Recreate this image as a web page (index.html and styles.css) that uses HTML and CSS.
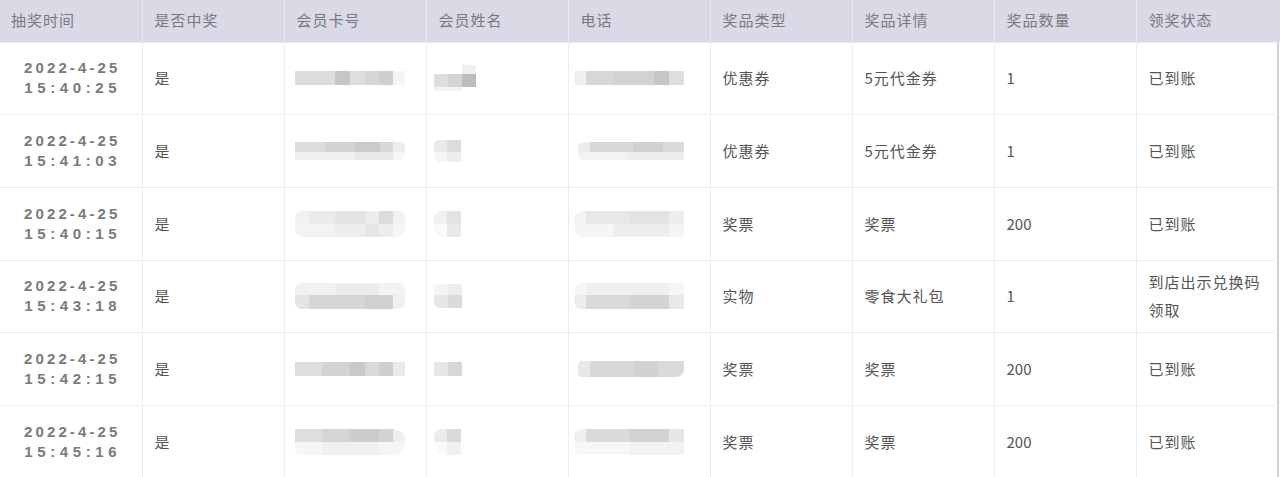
FILE: index.html
```html
<!DOCTYPE html>
<html lang="zh-CN">
<head>
<meta charset="utf-8">
<title>抽奖记录</title>
<link rel="stylesheet" href="styles.css">
</head>
<body>
<table class="records">
  <thead>
    <tr>
      <th>抽奖时间</th><th>是否中奖</th><th>会员卡号</th><th>会员姓名</th><th>电话</th><th>奖品类型</th><th>奖品详情</th><th>奖品数量</th><th>领奖状态</th>
    </tr>
  </thead>
  <tbody>
    <tr>
      <td class="time"><span class="d">2022-4-25</span><span class="t">15:40:25</span></td>
      <td>是</td>
      <td><div class="blob card-a"></div></td>
      <td><div class="blob name-a"></div></td>
      <td><div class="blob phone-a"></div></td>
      <td>优惠券</td><td>5元代金券</td><td class="num">1</td><td class="last">已到账</td>
    </tr>
    <tr>
      <td class="time"><span class="d">2022-4-25</span><span class="t">15:41:03</span></td>
      <td>是</td>
      <td><div class="blob card-b"></div></td>
      <td><div class="blob name-b"></div></td>
      <td><div class="blob phone-b"></div></td>
      <td>优惠券</td><td>5元代金券</td><td class="num">1</td><td class="last">已到账</td>
    </tr>
    <tr>
      <td class="time"><span class="d">2022-4-25</span><span class="t">15:40:15</span></td>
      <td>是</td>
      <td><div class="blob card-c"></div></td>
      <td><div class="blob name-c"></div></td>
      <td><div class="blob phone-c"></div></td>
      <td>奖票</td><td>奖票</td><td class="num">200</td><td class="last">已到账</td>
    </tr>
    <tr>
      <td class="time"><span class="d">2022-4-25</span><span class="t">15:43:18</span></td>
      <td>是</td>
      <td><div class="blob card-d"></div></td>
      <td><div class="blob name-d"></div></td>
      <td><div class="blob phone-d"></div></td>
      <td>实物</td><td>零食大礼包</td><td class="num">1</td><td class="last">到店出示兑换码领取</td>
    </tr>
    <tr>
      <td class="time"><span class="d">2022-4-25</span><span class="t">15:42:15</span></td>
      <td>是</td>
      <td><div class="blob card-e"></div></td>
      <td><div class="blob name-e"></div></td>
      <td><div class="blob phone-e"></div></td>
      <td>奖票</td><td>奖票</td><td class="num">200</td><td class="last">已到账</td>
    </tr>
    <tr>
      <td class="time"><span class="d">2022-4-25</span><span class="t">15:45:16</span></td>
      <td>是</td>
      <td><div class="blob card-f"></div></td>
      <td><div class="blob name-f"></div></td>
      <td><div class="blob phone-f"></div></td>
      <td>奖票</td><td>奖票</td><td class="num">200</td><td class="last">已到账</td>
    </tr>
  </tbody>
</table>
</body>
</html>
```

FILE: styles.css
```css
html, body {
  margin: 0;
  padding: 0;
  background: #ffffff;
}

body {
  font-family: "Noto Sans CJK SC", "Noto Sans", sans-serif;
  overflow: hidden;
}

.records {
  width: 1280px;
  table-layout: fixed;
  border-collapse: collapse;
  border-spacing: 0;
}

.records th,
.records td {
  width: 142px;
  padding: 0 12px;
  text-align: left;
  box-sizing: border-box;
}

.records th:last-child,
.records td:last-child {
  width: 144px;
}

.records thead th {
  height: 42px;
  background: #dadae6;
  color: #787884;
  font-size: 15px;
  font-weight: normal;
  letter-spacing: 1px;
  border-left: 1px solid #e9e9f1;
  border-bottom: 1px solid #eaeaf2;
  vertical-align: middle;
  padding-bottom: 2px;
}

.records thead th:first-child {
  border-left: none;
  padding-left: 11px;
}

.records tbody td {
  height: 72.7px;
  color: #555555;
  font-size: 15px;
  letter-spacing: 1px;
  line-height: 28px;
  border-left: 1px solid #ececf5;
  border-bottom: 1px solid #ededf5;
  vertical-align: middle;
}

.records tbody td.num {
  letter-spacing: 0;
}

.records tbody td:first-child {
  border-left: none;
}

.records tbody td.last {
  box-shadow: inset -1px 0 0 #ffffff, inset -3px 0 0 #cfcfd2;
  padding-right: 14px;
}

.records tbody td.time {
  text-align: center;
  padding: 0;
  font-family: "Liberation Sans", Arial, sans-serif;
  font-weight: bold;
  color: #7a7a7a;
  font-size: 15px;
  line-height: 20px;
}

.time .d,
.time .t {
  display: block;
}

.time .d {
  letter-spacing: 3.1px;
  padding-left: 3px;
}

.time .t {
  letter-spacing: 4.6px;
  padding-left: 4px;
}

/* blurred / pixelated privacy blobs */
.blob {
  height: 14px;
  filter: blur(0.6px);
}

.card-a {
  width: 110px;
  margin-left: -2px;
  background: linear-gradient(90deg, #dcdcdc 0 40px, #c6c6c6 40px 55px, #dedede 55px 70px, #d6d6d6 70px 84px, #cfcfcf 84px 98px, #f5f5f5 98px 110px);
}

.name-a {
  width: 42px;
  height: 26px;
  margin-left: -5px;
  background:
    linear-gradient(90deg, transparent 0 28px, #f0f0f0 28px 42px) top / 42px 9px no-repeat,
    linear-gradient(90deg, #dedede 0 14px, #d4d4d4 14px 28px, #bdbdbd 28px 41px) 0 9px / 42px 13px no-repeat,
    linear-gradient(90deg, #f4f4f4 0 28px, transparent 28px) 0 22px / 42px 4px no-repeat;
}

.phone-a {
  width: 110px;
  margin-left: -7px;
  background: linear-gradient(90deg, #efefef 0 12px, #d7d7d7 12px 40px, #d2d2d2 40px 80px, #c6c6c6 80px 95px, #dedede 95px 110px);
}

.card-b {
  width: 110px;
  height: 18px;
  margin-left: -2px;
  border-radius: 0 6px 6px 0;
  background:
    linear-gradient(90deg, #dcdcdc 0 30px, #d3d3d3 30px 60px, #cbcbcb 60px 85px, #d8d8d8 85px 98px, #ececec 98px 110px) top / 110px 10px no-repeat,
    linear-gradient(90deg, #f0f0f0 0 60px, #e8e8e8 60px 98px, #f6f6f6 98px 110px) 0 10px / 110px 8px no-repeat;
}

.name-b {
  width: 27px;
  height: 22px;
  margin-left: -5px;
  border-radius: 5px 0 0 5px;
  background:
    linear-gradient(90deg, #e9e9e9 0 13px, #dcdcdc 13px 27px) top / 27px 12px no-repeat,
    linear-gradient(90deg, #f6f6f6 0 13px, #eeeeee 13px 27px) 0 12px / 27px 10px no-repeat;
}

.phone-b {
  width: 106px;
  height: 18px;
  margin-left: -3px;
  border-radius: 6px 0 0 6px;
  background:
    linear-gradient(90deg, #ececec 0 12px, #d8d8d8 12px 55px, #d0d0d0 55px 85px, #dadada 85px 106px) top / 106px 10px no-repeat,
    linear-gradient(90deg, #f3f3f3 0 50px, #eeeeee 50px 106px) 0 10px / 106px 8px no-repeat;
}

.card-c {
  width: 110px;
  height: 26px;
  margin-left: -2px;
  border-radius: 7px;
  background:
    linear-gradient(90deg, #f1f1f1 0 14px, #ebebeb 14px 40px, #e4e4e4 40px 70px, #ececec 70px 84px, #dcdcdc 84px 98px, #f2f2f2 98px 110px) top / 110px 13px no-repeat,
    linear-gradient(90deg, #f3f3f3 0 40px, #eeeeee 40px 70px, #e6e6e6 70px 84px, #ececec 84px 98px, #f6f6f6 98px 110px) 0 13px / 110px 13px no-repeat;
}

.name-c {
  width: 27px;
  height: 26px;
  margin-left: -5px;
  border-radius: 8px 2px 2px 8px;
  background:
    linear-gradient(90deg, #f1f1f1 0 13px, #e3e3e3 13px 27px) top / 27px 13px no-repeat,
    linear-gradient(90deg, #fafafa 0 13px, #e8e8e8 13px 27px) 0 13px / 27px 13px no-repeat;
}

.phone-c {
  width: 110px;
  height: 26px;
  margin-left: -7px;
  border-radius: 8px 0 0 8px;
  background:
    linear-gradient(90deg, #f3f3f3 0 12px, #e8e8e8 12px 56px, #e3e3e3 56px 95px, #eeeeee 95px 110px) top / 110px 13px no-repeat,
    linear-gradient(90deg, #f5f5f5 0 40px, #ededed 40px 95px, #f5f5f5 95px 110px) 0 13px / 110px 13px no-repeat;
}

.card-d {
  width: 110px;
  height: 26px;
  margin-left: -2px;
  border-radius: 7px;
  background:
    linear-gradient(90deg, #f1f1f1 0 40px, #ececec 40px 84px, #f3f3f3 84px 110px) top / 110px 12px no-repeat,
    linear-gradient(90deg, #e4e4e4 0 14px, #d6d6d6 14px 70px, #d0d0d0 70px 98px, #f0f0f0 98px 110px) 0 12px / 110px 14px no-repeat;
}

.name-d {
  width: 28px;
  height: 24px;
  margin-left: -5px;
  border-radius: 6px 0 0 6px;
  background:
    linear-gradient(90deg, #f4f4f4 0 14px, #ededed 14px 28px) top / 28px 11px no-repeat,
    linear-gradient(90deg, #e6e6e6 0 14px, #dbdbdb 14px 28px) 0 11px / 28px 13px no-repeat;
}

.phone-d {
  width: 110px;
  height: 26px;
  margin-left: -7px;
  border-radius: 8px 0 0 8px;
  background:
    linear-gradient(90deg, #f6f6f6 0 12px, #efefef 12px 95px, #f6f6f6 95px 110px) top / 110px 12px no-repeat,
    linear-gradient(90deg, #ededed 0 12px, #d9d9d9 12px 56px, #d4d4d4 56px 95px, #e8e8e8 95px 110px) 0 12px / 110px 14px no-repeat;
}

.card-e {
  width: 110px;
  margin-left: -2px;
  background: linear-gradient(90deg, #dedede 0 27px, #d3d3d3 27px 55px, #c9c9c9 55px 70px, #d9d9d9 70px 84px, #cfcfcf 84px 98px, #eaeaea 98px 110px);
}

.name-e {
  width: 28px;
  margin-left: -5px;
  background: linear-gradient(90deg, #e6e6e6 0 14px, #d7d7d7 14px 28px);
}

.phone-e {
  width: 106px;
  height: 16px;
  margin-left: -3px;
  border-radius: 4px 0 8px 4px;
  background: linear-gradient(90deg, #e8e8e8 0 12px, #d7d7d7 12px 56px, #d1d1d1 56px 80px, #d9d9d9 80px 106px);
}

.card-f {
  width: 110px;
  height: 26px;
  margin-left: -2px;
  border-radius: 0 12px 12px 6px;
  background:
    linear-gradient(90deg, #dedede 0 27px, #d5d5d5 27px 55px, #cdcdcd 55px 84px, #d3d3d3 84px 98px, #eeeeee 98px 110px) top / 110px 13px no-repeat,
    linear-gradient(90deg, #f6f6f6 0 27px, #f0f0f0 27px 84px, #f5f5f5 84px 110px) 0 13px / 110px 13px no-repeat;
}

.name-f {
  width: 27px;
  height: 26px;
  margin-left: -5px;
  border-radius: 8px 0 0 8px;
  background:
    linear-gradient(90deg, #ebebeb 0 13px, #d9d9d9 13px 27px) top / 27px 13px no-repeat,
    linear-gradient(90deg, #fafafa 0 13px, #f1f1f1 13px 27px) 0 13px / 27px 13px no-repeat;
}

.phone-f {
  width: 110px;
  height: 26px;
  margin-left: -7px;
  border-radius: 8px 0 0 8px;
  background:
    linear-gradient(90deg, #f0f0f0 0 12px, #dadada 12px 56px, #d2d2d2 56px 95px, #e6e6e6 95px 110px) top / 110px 13px no-repeat,
    linear-gradient(90deg, #f7f7f7 0 56px, #f2f2f2 56px 110px) 0 13px / 110px 13px no-repeat;
}
```
